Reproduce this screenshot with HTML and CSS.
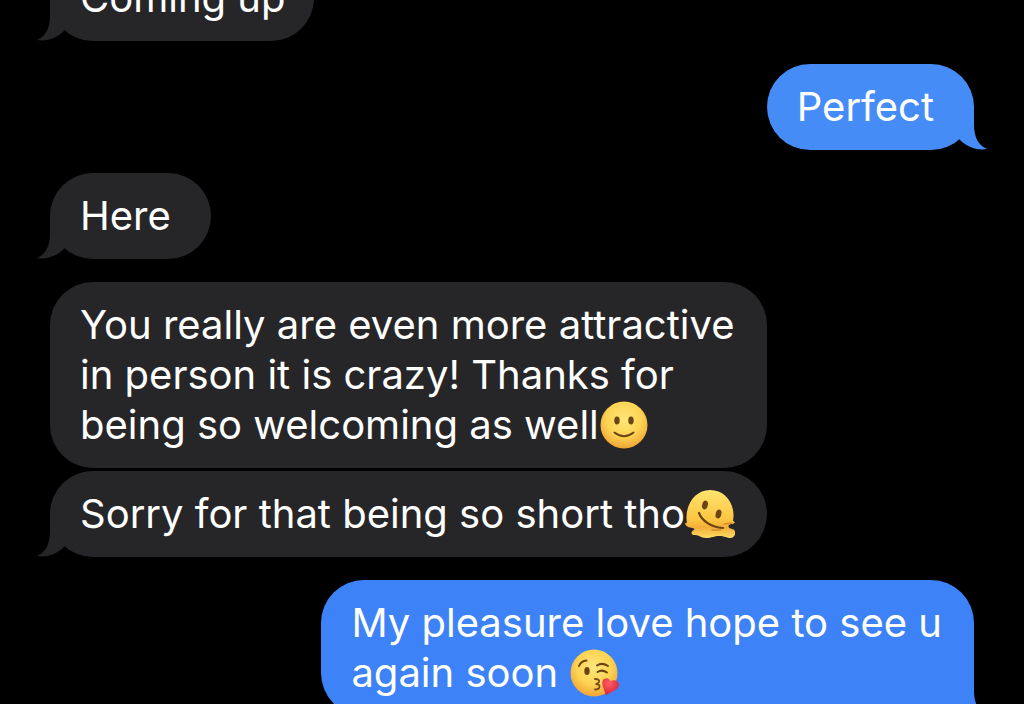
FILE: index.html
```
<!DOCTYPE html>
<html lang="en">
<head>
    <meta charset="UTF-8">
    <meta name="viewport" content="width=device-width, initial-scale=1.0">
    <title>Messages</title>
    <link rel="stylesheet" href="styles.css">
</head>
<body>
    <!-- shared shapes -->
    <svg class="defs" aria-hidden="true">
        <defs>
            <radialGradient id="face" cx="50%" cy="38%" r="62%">
                <stop offset="0" stop-color="#ffe77c"/>
                <stop offset="0.6" stop-color="#fdd352"/>
                <stop offset="1" stop-color="#f0a436"/>
            </radialGradient>
            <linearGradient id="melt" x1="0" y1="0" x2="0" y2="1">
                <stop offset="0" stop-color="#ffe56e"/>
                <stop offset="0.65" stop-color="#fbc340"/>
                <stop offset="0.78" stop-color="#f2ae38"/>
                <stop offset="1" stop-color="#ffdc62"/>
            </linearGradient>
            <radialGradient id="heart" cx="40%" cy="30%" r="70%">
                <stop offset="0" stop-color="#fb5f66"/>
                <stop offset="1" stop-color="#dc2238"/>
            </radialGradient>
            <symbol id="tail" viewBox="0 0 40 44">
                <path d="M13 0V18C13 31 9 39 0 43C11 45 21 40 28 33L40 30V0Z"/>
            </symbol>
        </defs>
    </svg>

    <main class="thread">
        <div class="bubble received snug">
            Coming up
            <svg class="tail"><use href="#tail"/></svg>
        </div>

        <div class="bubble sent light">
            Perfect
            <svg class="tail"><use href="#tail"/></svg>
        </div>

        <div class="bubble received">
            Here
            <svg class="tail"><use href="#tail"/></svg>
        </div>

        <div class="bubble received long">
            You really are even more attractive<br>
            in person it is crazy! Thanks for<br>
            being so welcoming as well<svg class="emoji" viewBox="0 0 50 50" role="img" aria-label="slightly smiling face">
                <circle cx="25" cy="25" r="23.5" fill="url(#face)"/>
                <ellipse cx="18" cy="20.5" rx="2.7" ry="4" fill="#6b4414"/>
                <ellipse cx="32" cy="20.5" rx="2.7" ry="4" fill="#6b4414"/>
                <path d="M15.5 32.5Q25 40 34.5 32.5" fill="none" stroke="#6b4414" stroke-width="2" stroke-linecap="round"/>
            </svg>
        </div>

        <div class="bubble received long grouped">
            Sorry for that being so short tho<svg class="emoji" viewBox="0 0 50 50" role="img" aria-label="melting face">
                <path d="M2 34C-1 18 9 1 25 1C41 1 51 16 48 32C51 33 50 35 46 35C42 36 43 39 47 40C52 41 51 48 46 49C41 49 40 47 34 47C29 47 27 49 21 49C15 49 15 46 10 46C5 46 6 42 9 41C11 39 6 39 3 38C-1 36 0 33 2 34Z" fill="url(#melt)"/>
                <ellipse cx="20" cy="16" rx="2.8" ry="4.5" transform="rotate(15 20 16)" fill="#6b4414"/>
                <ellipse cx="33.5" cy="25" rx="2.8" ry="4.5" transform="rotate(15 33.5 25)" fill="#6b4414"/>
                <path d="M14 24C17 32 26 38 38 39" fill="none" stroke="#6b4414" stroke-width="2.2" stroke-linecap="round"/>
                <path d="M27 41L36 41M39 35L47 34" fill="none" stroke="#d98b2b" stroke-width="1.5" stroke-linecap="round"/>
            </svg>
            <svg class="tail"><use href="#tail"/></svg>
        </div>

        <div class="bubble sent long">
            My pleasure love hope to see u<br>
            again soon <svg class="emoji" viewBox="0 0 50 50" role="img" aria-label="face blowing a kiss">
                <circle cx="25" cy="25" r="23.5" fill="url(#face)"/>
                <ellipse cx="18" cy="23" rx="2.7" ry="4" fill="#6b4414"/>
                <path d="M10 18Q12 13 17.5 12.5M28 17.5Q33 14 39 18M28.5 24Q33 21 38 24.5" fill="none" stroke="#6b4414" stroke-width="2" stroke-linecap="round"/>
                <path d="M26 31Q31 31 30 34Q29 36 26.5 36Q31 36 30.5 39Q30 41.5 26 41.5" fill="none" stroke="#7a4a18" stroke-width="1.8" stroke-linecap="round"/>
                <path d="M37 47C35 41 31 34 35 31C38 29 41 31 41.5 33.5C44 31 49 32 50 36C50 41 43 44 37 47Z" fill="url(#heart)"/>
            </svg>
            <svg class="tail"><use href="#tail"/></svg>
        </div>
    </main>
</body>
</html>
```
FILE: styles.css
```
* {
    box-sizing: border-box;
}

body {
    margin: 0;
    height: 100vh;
    overflow: hidden;
    background-color: #000;
    color: #fff;
    font-family: Inter, "Liberation Sans", Arial, sans-serif;
    font-size: 40px;
    line-height: 50px;
}

.defs {
    position: absolute;
    width: 0;
    height: 0;
}

/* scrolled so the first message is partly out of view */
.thread {
    display: flex;
    flex-direction: column;
    gap: 23px;
    margin-top: -45px;
    padding: 0 50px;
}

.bubble {
    position: relative;
    flex-shrink: 0;
    padding: 18px 40px 18px 30px;
    border-radius: 43px;
    white-space: nowrap;
}

.bubble.long {
    padding-right: 32px;
}

.bubble.snug {
    padding-right: 28px;
}

.bubble.grouped {
    margin-top: -20px;
}

.received {
    align-self: flex-start;
    background-color: #262628;
    fill: #262628;
}

.sent {
    align-self: flex-end;
    background-color: #3d83f7;
    fill: #3d83f7;
}

.sent.light {
    background-color: #468cf6;
    fill: #468cf6;
}

.tail {
    position: absolute;
    bottom: 0;
    left: -13px;
    width: 40px;
    height: 44px;
}

.sent .tail {
    left: auto;
    right: -13px;
    transform: scaleX(-1);
}

.emoji {
    width: 50px;
    height: 50px;
    margin: -8px 0;
    vertical-align: -3px;
}
```
